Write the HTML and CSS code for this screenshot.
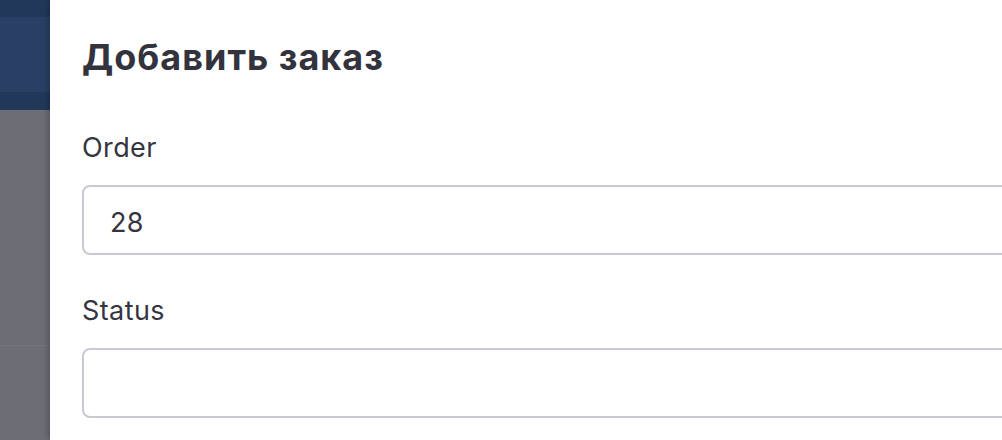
FILE: index.html
```html
<!DOCTYPE html>
<html lang="ru">
<head>
<meta charset="utf-8">
<link rel="stylesheet" href="styles.css">
</head>
<body>
<div class="page">
  <aside class="backdrop">
    <div class="bd-header">
      <div class="bd-band-top"></div>
      <div class="bd-band-mid"></div>
      <div class="bd-band-bot"></div>
    </div>
    <div class="bd-body">
      <div class="bd-row"></div>
      <div class="bd-rest"></div>
    </div>
  </aside>
  <main class="panel">
    <h1 class="title">Добавить заказ</h1>
    <div class="field">
      <label class="label">Order</label>
      <div class="input">28</div>
    </div>
    <div class="field">
      <label class="label">Status</label>
      <div class="input"></div>
    </div>
  </main>
</div>
</body>
</html>
```

FILE: styles.css
```css
html, body {
  margin: 0;
  padding: 0;
  background: #ffffff;
  overflow: hidden;
}
.page {
  display: flex;
  width: 1002px;
  height: 440px;
  font-family: Inter, "Noto Sans", sans-serif;
  color: #35353f;
}
.backdrop {
  width: 50px;
  flex: none;
  display: flex;
  flex-direction: column;
}
.bd-header {
  height: 110px;
  display: flex;
  flex-direction: column;
}
.bd-band-top {
  height: 17px;
  background: #22385b;
}
.bd-band-mid {
  height: 75px;
  background: #293f63;
}
.bd-band-bot {
  height: 18px;
  background: #22385b;
}
.bd-body {
  flex: 1;
  display: flex;
  flex-direction: column;
  background: #6d6d76;
}
.bd-row {
  height: 235px;
  border-bottom: 1px solid #74747c;
}
.bd-rest {
  flex: 1;
}
.panel {
  flex: 1;
  min-width: 0;
  background: #ffffff;
  padding: 37px 0 0 32px;
  box-shadow: -2px 0 6px rgba(0, 0, 0, 0.25);
  position: relative;
}
.title {
  margin: 0 0 55px;
  font-size: 36px;
  line-height: 40px;
  font-weight: 700;
  color: #33333d;
  letter-spacing: 1px;
}
.field {
  display: flex;
  flex-direction: column;
  margin-bottom: 40px;
}
.label {
  font-size: 27px;
  line-height: 32px;
  color: #35353f;
  margin-bottom: 21px;
  letter-spacing: 0.4px;
}
.input {
  border: 2px solid #c9c9d4;
  border-radius: 8px;
  margin-right: -40px;
  padding: 4px 26px 0;
  box-sizing: content-box;
  height: 62px;
  display: flex;
  align-items: center;
  font-size: 27px;
  letter-spacing: 0.4px;
  color: #35353f;
}
```
